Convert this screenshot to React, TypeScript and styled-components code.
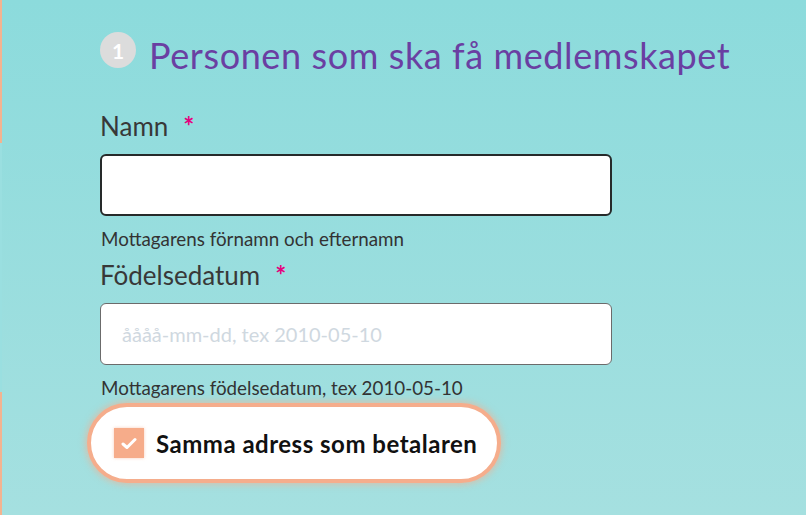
import React from "react";
import styled, { createGlobalStyle } from "styled-components";

const GlobalStyle = createGlobalStyle`
	html, body {
		margin: 0;
		padding: 0;
	}
	body {
		font-family: Lato, "Liberation Sans", sans-serif;
	}
`;

const Page = styled.div`
	display: flex;
	width: 806px;
	height: 515px;
	overflow: hidden;
	background: linear-gradient(180deg, #8cdbdc 0%, #a5e0e0 100%);
`;

// thin strip on the far left of the viewport
const Edge = styled.div`
	width: 2px;
	flex-shrink: 0;
	background: linear-gradient(
		180deg,
		#f3b390 0px,
		#f3b390 143px,
		#9adfe0 143px,
		#9adfe0 392px,
		#f3b390 392px
	);
`;

const Form = styled.div`
	display: flex;
	flex-direction: column;
	padding: 32px 0 0 98px;
	width: 512px;
`;

const Heading = styled.div`
	display: flex;
	align-items: flex-start;
	gap: 13px;
	margin-bottom: 38px;
`;

const StepBadge = styled.div`
	width: 36px;
	height: 36px;
	border-radius: 50%;
	background: #dcdcdc;
	color: #fff;
	font-size: 21px;
	font-weight: 700;
	display: flex;
	align-items: center;
	justify-content: center;
	flex-shrink: 0;
`;

const Title = styled.h1`
	margin: 5px 0 0;
	font-size: 36px;
	font-weight: 400;
	line-height: 36px;
	letter-spacing: 0.6px;
	color: #6a3fa2;
	white-space: nowrap;
`;

const Field = styled.div<{ $gap?: number }>`
	display: flex;
	flex-direction: column;
	margin-bottom: ${(p) => p.$gap ?? 0}px;
`;

const Label = styled.label`
	font-size: 26px;
	line-height: 30px;
	color: #383838;
	margin-bottom: 13px;
`;

const Required = styled.span`
	color: #e5007d;
	margin-left: 15px;
	font-weight: 700;
`;

const Input = styled.input<{ $strong?: boolean }>`
	box-sizing: border-box;
	width: 512px;
	height: 62px;
	border-radius: 6px;
	border: ${(p) => (p.$strong ? "2px solid #262a2a" : "1px solid #6b6b6b")};
	background: #fff;
	padding: 0 21px;
	font-family: Lato, "Liberation Sans", sans-serif;
	font-size: 20px;
	color: #333;
	outline: none;

	&::placeholder {
		color: #cfd8e0;
	}
`;

const Help = styled.div`
	font-size: 18.8px;
	line-height: 22px;
	color: #333;
	margin-top: 12px;
	padding-left: 1px;
`;

const CheckPill = styled.label`
	display: flex;
	align-items: center;
	gap: 12px;
	box-sizing: border-box;
	width: 414px;
	height: 80px;
	margin-left: -13px;
	padding-left: 23px;
	border-radius: 40px;
	background: #fff;
	border: 4px solid #f5ad8c;
	box-shadow: 0 0 6px 2px rgba(245, 173, 140, 0.55);
	cursor: pointer;
`;

const Box = styled.span`
	width: 30px;
	height: 30px;
	background: #f6ac8a;
	display: flex;
	align-items: center;
	justify-content: center;
	box-shadow: 0 0 3px rgba(246, 172, 138, 0.6);
	flex-shrink: 0;
`;

const CheckText = styled.span`
	font-size: 24px;
	font-weight: 700;
	color: #111;
	letter-spacing: 0.5px;
`;

export default function App() {
	return (
		<>
			<GlobalStyle />
			<Page>
				<Edge />
				<Form>
					<Heading>
						<StepBadge>1</StepBadge>
						<Title>Personen som ska få medlemskapet</Title>
					</Heading>

					<Field $gap={10}>
						<Label>
							Namn<Required>*</Required>
						</Label>
						<Input $strong />
						<Help>Mottagarens förnamn och efternamn</Help>
					</Field>

					<Field $gap={4}>
						<Label>
							Födelsedatum<Required>*</Required>
						</Label>
						<Input placeholder="åååå-mm-dd, tex 2010-05-10" />
						<Help>Mottagarens födelsedatum, tex 2010-05-10</Help>
					</Field>

					<CheckPill>
						<Box>
							<svg width="16" height="13" viewBox="0 0 16 13">
								<path
									d="M2 7 L6 10.5 L14 2.5"
									fill="none"
									stroke="#fff"
									strokeWidth="3"
									strokeLinecap="round"
									strokeLinejoin="round"
								/>
							</svg>
						</Box>
						<CheckText>Samma adress som betalaren</CheckText>
					</CheckPill>
				</Form>
			</Page>
		</>
	);
}
